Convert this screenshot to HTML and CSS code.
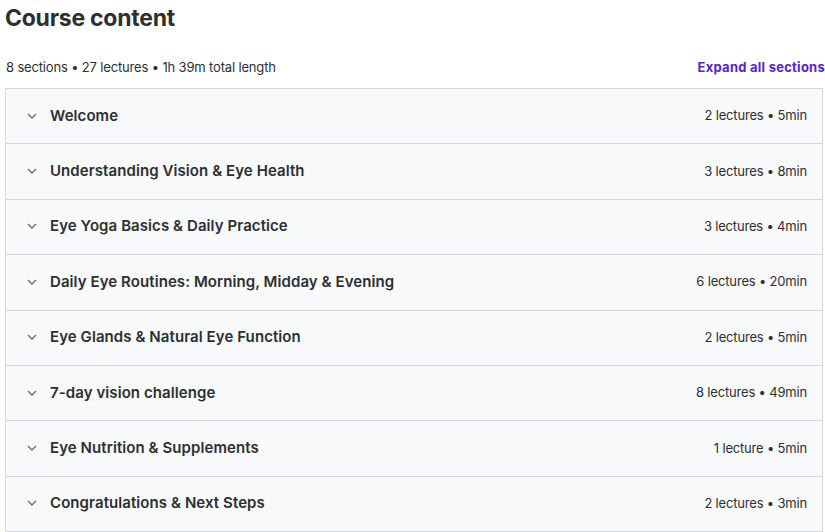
FILE: index.html
```html
<!DOCTYPE html>
<html>
<head>
<meta charset="utf-8">
<link rel="stylesheet" href="styles.css">
</head>
<body>
<div class="course">
  <h2 class="title">Course content</h2>
  <div class="summary">
    <span class="stats">8 sections • 27 lectures • 1h 39m total length</span>
    <button class="expand">Expand all sections</button>
  </div>
  <div class="sections">
    <div class="section"><span class="chev"><svg viewBox="0 0 10 6" width="10" height="6"><path d="M1 1l4 4 4-4" fill="none" stroke="currentColor" stroke-width="1.4"/></svg></span><span class="name">Welcome</span><span class="meta">2 lectures • 5min</span></div>
    <div class="section"><span class="chev"><svg viewBox="0 0 10 6" width="10" height="6"><path d="M1 1l4 4 4-4" fill="none" stroke="currentColor" stroke-width="1.4"/></svg></span><span class="name">Understanding Vision &amp; Eye Health</span><span class="meta">3 lectures • 8min</span></div>
    <div class="section"><span class="chev"><svg viewBox="0 0 10 6" width="10" height="6"><path d="M1 1l4 4 4-4" fill="none" stroke="currentColor" stroke-width="1.4"/></svg></span><span class="name">Eye Yoga Basics &amp; Daily Practice</span><span class="meta">3 lectures • 4min</span></div>
    <div class="section"><span class="chev"><svg viewBox="0 0 10 6" width="10" height="6"><path d="M1 1l4 4 4-4" fill="none" stroke="currentColor" stroke-width="1.4"/></svg></span><span class="name">Daily Eye Routines: Morning, Midday &amp; Evening</span><span class="meta">6 lectures • 20min</span></div>
    <div class="section"><span class="chev"><svg viewBox="0 0 10 6" width="10" height="6"><path d="M1 1l4 4 4-4" fill="none" stroke="currentColor" stroke-width="1.4"/></svg></span><span class="name">Eye Glands &amp; Natural Eye Function</span><span class="meta">2 lectures • 5min</span></div>
    <div class="section"><span class="chev"><svg viewBox="0 0 10 6" width="10" height="6"><path d="M1 1l4 4 4-4" fill="none" stroke="currentColor" stroke-width="1.4"/></svg></span><span class="name">7-day vision challenge</span><span class="meta">8 lectures • 49min</span></div>
    <div class="section"><span class="chev"><svg viewBox="0 0 10 6" width="10" height="6"><path d="M1 1l4 4 4-4" fill="none" stroke="currentColor" stroke-width="1.4"/></svg></span><span class="name">Eye Nutrition &amp; Supplements</span><span class="meta">1 lecture • 5min</span></div>
    <div class="section"><span class="chev"><svg viewBox="0 0 10 6" width="10" height="6"><path d="M1 1l4 4 4-4" fill="none" stroke="currentColor" stroke-width="1.4"/></svg></span><span class="name">Congratulations &amp; Next Steps</span><span class="meta">2 lectures • 3min</span></div>
  </div>
</div>
</body>
</html>
```
FILE: styles.css
```css
* { box-sizing: border-box; }
html, body { margin: 0; padding: 0; background: #fff; }
body {
  font-family: Inter, "Noto Sans", sans-serif;
  color: #2d2f31;
}
.course {
  margin: 0 2px 0 5px;
}
.title {
  margin: 0;
  padding-top: 3px;
  font-size: 23px;
  line-height: 30px;
  font-weight: 700;
  letter-spacing: -0.25px;
}
.summary {
  display: flex;
  justify-content: space-between;
  align-items: center;
  margin-top: 24px;
  height: 20px;
  margin-bottom: 11px;
}
.stats {
  font-size: 13px;
  color: #2d2f31;
  padding-left: 1px;
  letter-spacing: -0.16px;
}
.expand {
  border: 0;
  background: none;
  padding: 0;
  margin-right: -2px;
  font-family: inherit;
  font-size: 13px;
  font-weight: 700;
  letter-spacing: 0.25px;
  color: #5624d0;
  cursor: pointer;
}
.sections {
  border: 1px solid #d1d7dc;
  border-bottom: 0;
}
.section {
  display: flex;
  align-items: center;
  background: #f7f9fa;
  border-bottom: 1px solid #d1d7dc;
  height: 55.4px;
  padding: 0 15px 2px 21px;
}
.chev {
  display: flex;
  width: 10px;
  color: #6a6f73;
  margin-right: 13px;
  margin-top: 1px;
}
.name {
  flex: 1;
  font-size: 15px;
  font-weight: 600;
  letter-spacing: 0.08px;
  color: #2d2f31;
}
.meta {
  font-size: 13px;
  color: #2d2f31;
  letter-spacing: -0.18px;
}
```
